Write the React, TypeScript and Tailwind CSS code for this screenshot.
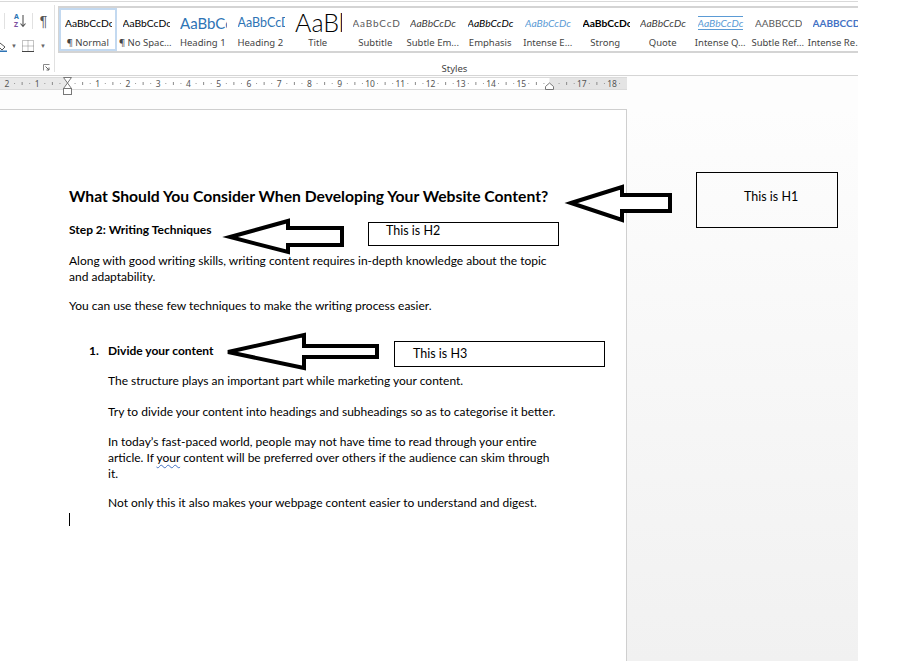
import React from 'react';

interface GalleryStyle {
  label: string;
  sample: string;
  sampleClass: string;
  selected?: boolean;
}

const galleryStyles: GalleryStyle[] = [
  { label: '¶ Normal', sample: 'AaBbCcDc', sampleClass: 'text-[10.3px] text-black', selected: true },
  { label: '¶ No Spac...', sample: 'AaBbCcDc', sampleClass: 'text-[10.3px] text-black' },
  { label: 'Heading 1', sample: 'AaBbCc', sampleClass: 'text-[15px] text-[#2e74b5]' },
  { label: 'Heading 2', sample: 'AaBbCcD', sampleClass: 'text-[12.5px] text-[#2e74b5]' },
  { label: 'Title', sample: 'AaBl', sampleClass: 'text-[25px] font-light text-black' },
  { label: 'Subtitle', sample: 'AaBbCcD', sampleClass: 'text-[10px] tracking-[0.8px] text-[#5a5a5a]' },
  { label: 'Subtle Em...', sample: 'AaBbCcDc', sampleClass: 'text-[10.3px] italic text-[#404040]' },
  { label: 'Emphasis', sample: 'AaBbCcDc', sampleClass: 'text-[10.3px] italic text-black' },
  { label: 'Intense E...', sample: 'AaBbCcDc', sampleClass: 'text-[10.3px] italic text-[#5b9bd5]' },
  { label: 'Strong', sample: 'AaBbCcDc', sampleClass: 'text-[10.3px] font-bold text-black' },
  { label: 'Quote', sample: 'AaBbCcDc', sampleClass: 'text-[10.3px] italic text-[#404040]' },
  { label: 'Intense Q...', sample: 'AaBbCcDc', sampleClass: 'text-[10.3px] italic text-[#5b9bd5] border-y border-[#5b9bd5]' },
  { label: 'Subtle Ref...', sample: 'AABBCCDE', sampleClass: 'text-[10px] text-[#5a5a5a]' },
  { label: 'Intense Re...', sample: 'AABBCCD', sampleClass: 'text-[10px] font-bold text-[#4472c4]' },
];

const Ribbon: React.FC = () => (
  <div className="h-[76px] border-b border-[#d5d5d5] pt-[1px]">
    <div className="flex h-full border-t border-[#d9d9d9]">
      {/* paragraph group, cut off on the left */}
      <div className="relative w-[55px] shrink-0 border-r border-[#e1e1e1] my-[3px]">
        <div className="flex items-center h-[16px] mt-[8px]">
          <div className="ml-[4px] w-px h-[16px] bg-[#e1e1e1]" />
          <div className="ml-[9px] flex items-center">
            <div className="flex flex-col font-['Noto_Sans',sans-serif] text-[7px] leading-[8px] font-bold">
              <span className="text-[#2e74b5]">A</span>
              <span className="text-[#7b4fa0]">Z</span>
            </div>
            <svg width="6" height="14" viewBox="0 0 6 14" className="ml-[1px]">
              <path d="M3 1 V12 M0.5 9.5 L3 12.5 L5.5 9.5" stroke="#555" strokeWidth="1.1" fill="none" />
            </svg>
          </div>
          <div className="ml-[6px] w-px h-[16px] bg-[#e1e1e1]" />
          <span className="ml-[7px] font-['Liberation_Sans',sans-serif] text-[14px] leading-none text-[#555]">¶</span>
        </div>
        <div className="flex items-center h-[12px] mt-[11px]">
          <svg width="8" height="12" viewBox="0 0 8 12">
            <path d="M0 3 L5 7 L2 10 L0 8" stroke="#555" strokeWidth="1" fill="none" />
            <rect x="0" y="10.5" width="7" height="1.5" fill="#2e74b5" />
          </svg>
          <span className="ml-[3px] text-[6px] text-[#666] leading-none">▼</span>
          <svg width="12" height="12" viewBox="0 0 12 12" className="ml-[5px]">
            <path d="M0.5 0.5 H11.5 V11.5 H0.5 Z M6 0.5 V11.5 M0.5 6 H11.5" stroke="#888" strokeWidth="1" strokeDasharray="1 1" fill="none" />
            <path d="M0 11.5 H12" stroke="#444" strokeWidth="1" />
          </svg>
          <span className="ml-[6px] text-[6px] text-[#666] leading-none">▼</span>
        </div>
        <svg width="7" height="7" viewBox="0 0 7 7" className="absolute right-[4px] bottom-[1px]">
          <path d="M0.5 6.5 V0.5 H6.5" stroke="#888" strokeWidth="1" fill="none" />
          <path d="M2.5 2.5 L6 6 M6 3.5 V6 H3.5" stroke="#666" strokeWidth="1" fill="none" />
        </svg>
      </div>

      {/* styles group */}
      <div className="flex-1 min-w-0 flex flex-col pt-[4px]">
        <div className="ml-[3px] flex h-[48px] border-y-2 border-l border-[#d4d4d4] bg-white overflow-hidden">
          {galleryStyles.map((s) => (
            <div
              key={s.label}
              className={`w-[57.5px] shrink-0 flex flex-col items-center ${s.selected ? 'border-2 border-[#c3d9f0]' : 'border-2 border-transparent'}`}
            >
              <div className="self-start ml-[4px] h-[26px] w-[47px] flex items-center overflow-hidden">
                <span className={`whitespace-nowrap leading-tight font-['Lato',sans-serif] ${s.sampleClass}`}>{s.sample}</span>
              </div>
              <span className="mt-[1px] whitespace-nowrap font-['Noto_Sans',sans-serif] text-[9.5px] leading-[12px] text-[#444]">
                {s.label}
              </span>
            </div>
          ))}
        </div>
        <div className="mt-[10px] text-center pr-[4px] font-['Noto_Sans',sans-serif] text-[9.5px] leading-[12px] text-[#444]">
          Styles
        </div>
      </div>
    </div>
  </div>
);

const Ruler: React.FC = () => {
  const origin = 67.5;
  const unit = 30.25;
  const numbers = [-2, -1, 1, 2, 3, 4, 5, 6, 7, 8, 9, 10, 11, 12, 13, 14, 15, 17, 18];
  const marks: React.ReactNode[] = [];
  for (let q = -10; q <= 75; q++) {
    const x = origin + (unit * q) / 4;
    if (x < 0 || x > 624) continue;
    if (q % 4 === 0) continue;
    if (Math.abs(x - 549.5) < 5) continue;
    if (q % 2 === 0) {
      marks.push(<line key={q} x1={x} x2={x} y1={6} y2={9} stroke="#8a8a8a" strokeWidth="1" />);
    } else {
      marks.push(<rect key={q} x={x - 0.5} y={7} width="1" height="1" fill="#9a9a9a" />);
    }
  }
  return (
    <div className="h-[33px] bg-[#fdfdfd]">
      <svg width="858" height="33" viewBox="0 0 858 33">
        <rect x="0" y="1" width="627" height="13" fill="#ffffff" />
        <rect x="0" y="1" width="67.5" height="13" fill="#e9e9e9" />
        <rect x="549.5" y="1" width="77.5" height="13" fill="#e4e4e4" />
        <path d="M0 1.5 H627 M0 13.5 H627" stroke="#dadada" strokeWidth="1" />
        {marks}
        {numbers.map((n) => (
          <text
            key={n}
            x={origin + unit * n}
            y={11}
            textAnchor="middle"
            fontFamily="Noto Sans, sans-serif"
            fontSize="8.5"
            fill="#555"
          >
            {Math.abs(n)}
          </text>
        ))}
        <path d="M63.5 1.5 H71.5 L67.5 7 Z M67.5 7 L63.5 12.5 H71.5 Z" fill="#fff" stroke="#777" strokeWidth="1" />
        <rect x="63.5" y="12.5" width="8" height="6" fill="#fff" stroke="#777" strokeWidth="1" />
        <path d="M545.5 13.5 V10.5 L549.5 7 L553.5 10.5 V13.5 Z" fill="#fff" stroke="#777" strokeWidth="1" />
      </svg>
    </div>
  );
};

const Page: React.FC = () => (
  <div className="w-[627px] shrink-0 border-t border-r border-[#cfcfcf] bg-white">
    <div className="pl-[69px] pt-[76px] font-['Lato',sans-serif] text-black whitespace-nowrap">
      <h1 className="text-[15.7px] font-bold leading-[20px]">
        What Should You Consider When Developing Your Website Content?
      </h1>
      <h2 className="mt-[16px] text-[12px] font-bold leading-[16px]">Step 2: Writing Techniques</h2>
      <p className="mt-[15px] text-[12px] leading-[16px]">
        Along with good writing skills, writing content requires in-depth knowledge about the topic
        <br />
        and adaptability.
      </p>
      <p className="mt-[13px] text-[12px] leading-[16px]">
        You can use these few techniques to make the writing process easier.
      </p>
      <div className="mt-[29px] flex text-[12px] font-bold leading-[16px]">
        <span className="ml-[20px] w-[19px]">1.</span>
        <h3>Divide your content</h3>
      </div>
      <div className="pl-[39px] text-[12px] leading-[16px]">
        <p className="mt-[14px]">The structure plays an important part while marketing your content.</p>
        <p className="mt-[15px]">
          Try to divide your content into headings and subheadings so as to categorise it better.
        </p>
        <p className="mt-[14px]">
          In today’s fast-paced world, people may not have time to read through your entire
          <br />
          article. If{' '}
          <span className="underline decoration-wavy decoration-[#4472c4] decoration-1 underline-offset-2">your</span>{' '}
          content will be preferred over others if the audience can skim through
          <br />
          it.
        </p>
        <p className="mt-[13px]">
          Not only this it also makes your webpage content easier to understand and digest.
        </p>
      </div>
      <div className="mt-[2px] h-[13px] w-px bg-black" />
    </div>
  </div>
);

export default function App() {
  return (
    <div className="relative w-[922px] h-[661px] overflow-hidden bg-white">
      <div className="flex h-full w-[858px] flex-col">
        <Ribbon />
        <Ruler />
        <div className="flex flex-1 min-h-0">
          <Page />
          <div className="flex-1 bg-gradient-to-b from-[#fdfdfd] to-[#f1f1f1]" />
        </div>
      </div>

      {/* hand-drawn arrows */}
      <svg width="922" height="661" viewBox="0 0 922 661" className="absolute left-0 top-0 pointer-events-none">
        <polygon
          points="571,203 622,187 622,195 670,195 670,211 622,211 622,220"
          fill="#fff"
          stroke="#000"
          strokeWidth="4"
        />
        <polygon
          points="230,237 288,221 288,228 342,228 342,245 288,245 288,252"
          fill="#fff"
          stroke="#000"
          strokeWidth="4"
        />
        <polygon
          points="228,352 304,335 304,346 377,346 377,357 304,357 304,368"
          fill="#fff"
          stroke="#000"
          strokeWidth="4"
        />
      </svg>

      {/* text boxes */}
      <div className="absolute left-[696px] top-[172px] w-[142px] h-[56px] border-[1.5px] border-black font-['Lato',sans-serif] text-[12.5px] text-black">
        <span className="absolute left-[47px] top-[16px] leading-[16px]">This is H1</span>
      </div>
      <div className="absolute left-[368px] top-[222px] w-[191px] h-[24px] border-[1.5px] border-black bg-white font-['Lato',sans-serif] text-[12.5px] text-black">
        <span className="absolute left-[17px] top-[0px] leading-[16px]">This is H2</span>
      </div>
      <div className="absolute left-[394px] top-[341px] w-[211px] h-[26px] border-[1.5px] border-black bg-white font-['Lato',sans-serif] text-[12.5px] text-black">
        <span className="absolute left-[18px] top-[4px] leading-[16px]">This is H3</span>
      </div>
    </div>
  );
}
